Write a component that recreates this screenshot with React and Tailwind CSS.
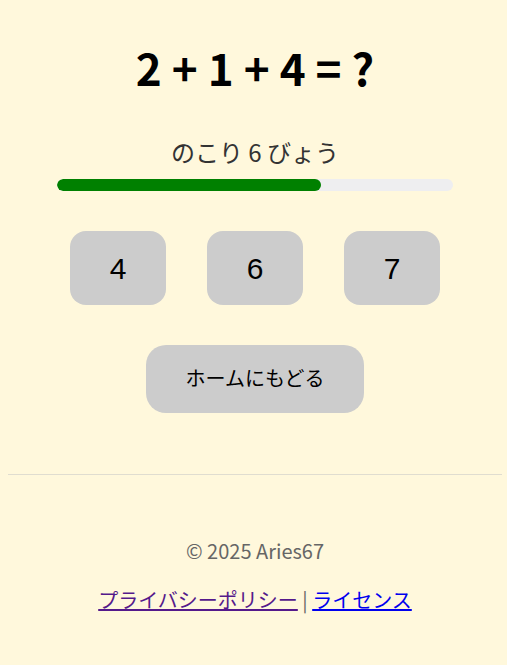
import React from "react";

const choices = [4, 6, 7];

export default function App() {
  const remaining = 6;
  const total = 9;

  return (
    <div className="min-h-screen bg-[#fff8dc] font-['Noto_Sans_CJK_JP','Noto_Sans',sans-serif] text-black">
      <div className="mx-2 w-[494px] text-center">
        <h1 className="pt-[38px] text-[44px] leading-[58px] font-bold">
          2 + 1 + 4 = ?
        </h1>

        <p className="mt-[41px] text-[24px] leading-[30px] text-[#333]">
          のこり 6 びょう
        </p>

        <div className="mx-auto mt-[12px] h-[12px] w-4/5 overflow-hidden rounded-full bg-[#eeeef0]">
          <div
            className="h-full rounded-full bg-[#008000]"
            style={{ width: `${(remaining / total) * 100}%` }}
          />
        </div>

        <div className="mt-[40px] flex justify-center gap-[41px]">
          {choices.map((n) => (
            <button
              key={n}
              className="h-[74px] w-[96px] rounded-[16px] bg-[#cccccc] font-['Liberation_Sans',Arial,sans-serif] text-[30px] text-black"
            >
              {n}
            </button>
          ))}
        </div>

        <button className="mt-[40px] h-[68px] w-[218px] rounded-[20px] bg-[#cccccc] font-['Liberation_Sans','Noto_Sans_CJK_JP',sans-serif] text-[20px] text-black">
          ホームにもどる
        </button>

        <hr className="mt-[61px] border-t border-[#e0ddd0]" />

        <footer className="pt-[61px] text-[20px] leading-[29px] text-[#666]">
          <p>© 2025 Aries67</p>
          <p className="mt-[20px]">
            <a href="#privacy" className="text-[#551a8b] underline">
              プライバシーポリシー
            </a>{" "}
            |{" "}
            <a href="#license" className="text-[#0000ee] underline">
              ライセンス
            </a>
          </p>
        </footer>
      </div>
    </div>
  );
}
